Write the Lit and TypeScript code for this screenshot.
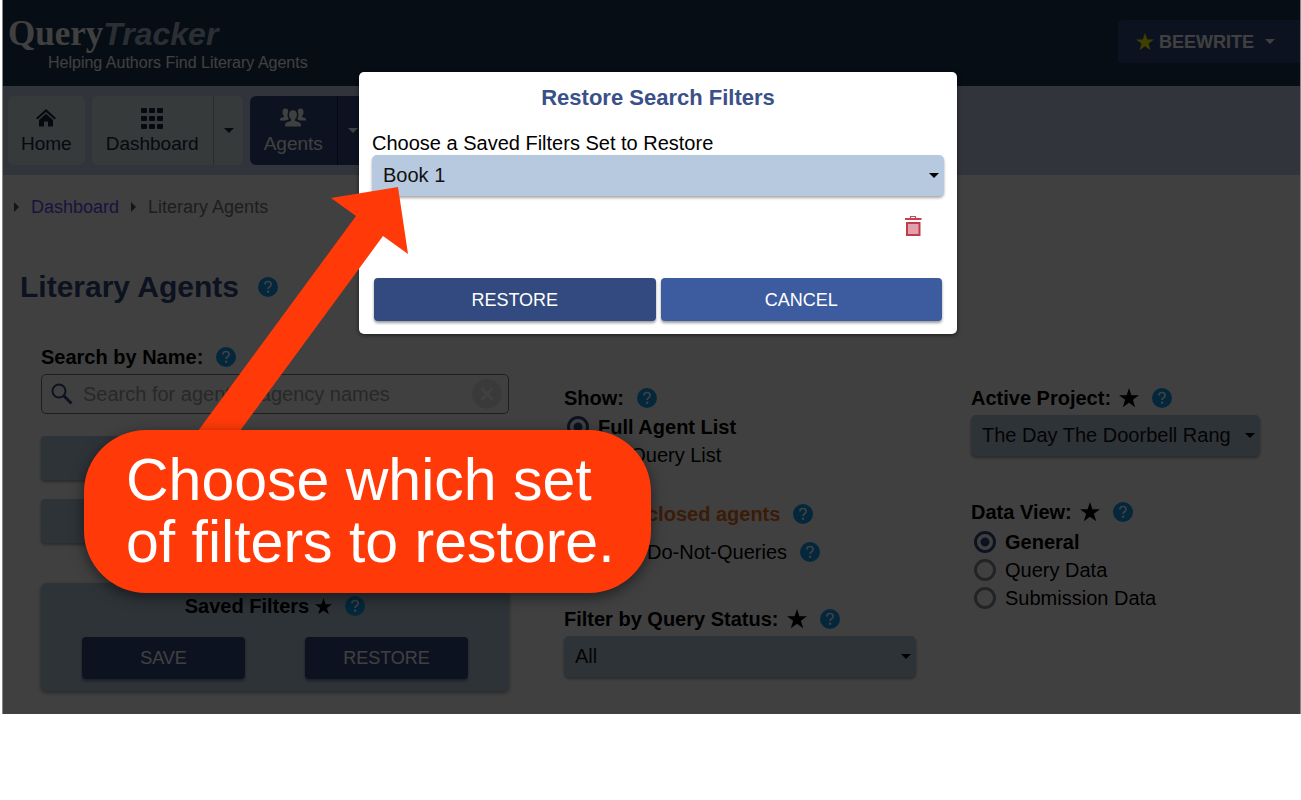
import { LitElement, html, svg, css } from "lit";
import { customElement, property } from "lit/decorators.js";

const caret = html`<svg class="caret" viewBox="0 0 10 5" width="10" height="5" aria-hidden="true"><path d="M0 0h10L5 5z" fill="currentColor" /></svg>`;

const star = html`<svg class="star" viewBox="0 0 20 20" width="20" height="20" aria-hidden="true"><path d="M10 0l2.400 7.300H20l-6.100 4.500 2.300 7.400L10 14.700l-6.200 4.500 2.300-7.400L0 7.300h7.600z" fill="currentColor" /></svg>`;

const help = html`<button class="help" type="button" aria-label="Help">
  <svg viewBox="0 0 20 20" width="20" height="20" aria-hidden="true">
    <circle cx="10" cy="10" r="10" fill="#129cf0" />
    <path d="M6.9 7.6C6.9 5.6 8.2 4.5 10 4.5s3.1 1.1 3.1 2.7c0 1.3-.7 1.9-1.6 2.6-.9.6-1.4 1.1-1.4 2.2" fill="none" stroke="#fff" stroke-width="1.700" />
    <circle cx="10.100" cy="14.700" r="1.200" fill="#fff" />
  </svg>
</button>`;

const controlStyles = css`
  :host {
    display: block;
    font: 20px/24px "Liberation Sans", Arial, sans-serif;
    color: #000;
  }
  * {
    box-sizing: border-box;
  }
  button {
    font: inherit;
    color: inherit;
    border: 0;
    padding: 0;
    background: none;
    cursor: pointer;
  }
  .caret {
    display: block;
  }
`;

@customElement("qt-select")
class QtSelect extends LitElement {
  @property() label = "";
  @property() value = "";
  static styles = [
    controlStyles,
    css`
      .box {
        display: grid;
        align-items: center;
        border-radius: 5px;
        background: #b7c9de;
        box-shadow: 0 2px 3px rgba(0, 0, 0, 0.35);
      }
      select,
      .caret {
        grid-area: 1 / 1;
      }
      select {
        appearance: none;
        width: 100%;
        height: 41px;
        padding: 0 20px 2px 11px;
        border: 0;
        border-radius: 5px;
        background: transparent;
        font: inherit;
        color: #111;
      }
      .caret {
        justify-self: end;
        margin-right: 5px;
        pointer-events: none;
      }
    `,
  ];
  render() {
    return html`<div class="box">
      <select aria-label=${this.label}>
        <option>${this.value}</option>
      </select>
      ${caret}
    </div>`;
  }
}

@customElement("app-root")
class AppRoot extends LitElement {
  static styles = [
    controlStyles,
    css`
      .frame {
        position: relative;
        margin: 0 1px 0 3px;
        background: #fff;
        box-shadow: 0 0 0 1px #888;
      }
      header {
        display: flex;
        justify-content: space-between;
        height: 86px;
        padding-left: 5px;
        background: #1a3654;
        color: #fff;
      }
      .logo {
        padding-top: 14px;
        font-size: 32px;
        line-height: 40px;
        font-weight: bold;
      }
      .query {
        font-family: "Liberation Serif", serif;
        font-size: 35px;
      }
      .tracker {
        font-style: italic;
        color: #acbcd4;
      }
      .tagline {
        padding-left: 40px;
        font-size: 16px;
        line-height: 18px;
      }
      .account {
        display: flex;
        align-items: center;
        align-self: flex-start;
        gap: 5px;
        height: 43px;
        margin-top: 20px;
        padding: 0 25px 0 18px;
        border-radius: 4px 0 0 4px;
        background: #324a80;
        font-size: 18px;
        font-weight: bold;
      }
      .account .star {
        width: 18px;
        height: 18px;
        color: #ff0;
      }
      .account .caret {
        margin-left: 6px;
      }
      nav.main {
        display: flex;
        gap: 7px;
        padding: 10px 5px;
        background: #c6d0ec;
      }
      .item {
        display: flex;
        height: 69px;
        border-radius: 6px;
        background: #dce6ec;
        color: #18243c;
        font-size: 19px;
      }
      .item a {
        display: flex;
        flex-direction: column;
        align-items: center;
        gap: 3px;
        padding: 11px 14px 0;
        color: inherit;
        text-decoration: none;
      }
      .item.narrow a {
        padding: 11px 13px 0;
      }
      .item a svg {
        height: 22px;
      }
      .item button {
        width: 30px;
        padding-left: 10px;
        border-left: 1px solid #a8b4c0;
      }
      .item.active {
        background: #324a80;
        color: #fff;
      }
      .item.active button {
        border-color: #16224a;
      }
      .crumbs {
        display: flex;
        align-items: center;
        gap: 12px;
        padding: 20px 11px 0;
        font-size: 18px;
        color: #777;
      }
      .crumbs a {
        color: #6a4cff;
        text-decoration: none;
      }
      .crumbs span {
        display: flex;
        align-items: center;
        gap: 12px;
      }
      h1 {
        display: flex;
        align-items: center;
        margin: 50px 0 40px;
        padding-left: 17px;
        font-size: 30px;
        line-height: 36px;
        color: #324a80;
      }
      .help {
        display: block;
        flex: none;
        width: 20px;
        height: 20px;
        margin-left: 13px;
      }
      .help svg {
        display: block;
      }
      h1 .help {
        margin-left: 19px;
      }
      .filters {
        display: grid;
        grid-template-columns: 468fr 352fr 289fr;
        column-gap: 55px;
        padding: 0 40px 23px 38px;
      }
      .lower {
        padding-top: 41px;
      }
      .label {
        display: flex;
        align-items: center;
        font-weight: bold;
      }
      .label .star {
        margin-left: 8px;
      }
      .search {
        display: flex;
        align-items: center;
        height: 40px;
        margin: 5px 0 22px;
        padding: 0 6px 0 9px;
        border: 1px solid #777;
        border-radius: 5px;
      }
      .search input {
        flex: 1;
        min-width: 0;
        padding: 0 10px;
        border: 0;
        outline: 0;
        background: none;
        font: inherit;
      }
      .search input::placeholder {
        color: #a0a0a0;
        opacity: 1;
      }
      .search svg {
        display: block;
      }
      .wide {
        display: block;
        width: 100%;
        height: 44px;
        margin-bottom: 19px;
        border-radius: 4px;
        background: #b7c9de;
        box-shadow: 0 2px 3px rgba(0, 0, 0, 0.35);
      }
      .saved {
        margin-top: 40px;
        padding: 11px 41px 12px;
        border-radius: 6px;
        background: #b7c9de;
        box-shadow: 0 2px 4px rgba(0, 0, 0, 0.4);
      }
      .saved .label {
        justify-content: center;
      }
      .saved .star {
        width: 17px;
        height: 17px;
        margin-left: 6px;
      }
      .pair {
        display: grid;
        grid-template-columns: 1fr 1fr;
        gap: 60px;
        margin-top: 19px;
      }
      .primary,
      .secondary {
        height: 42px;
        border-radius: 4px;
        background: #324a80;
        box-shadow: 0 2px 3px rgba(0, 0, 0, 0.4);
        color: #fff;
        font-size: 18px;
      }
      .options {
        margin-top: 3px;
      }
      .choice {
        display: flex;
        align-items: center;
        height: 28px;
      }
      .choice label {
        display: flex;
        align-items: center;
        gap: 9px;
      }
      .choice input {
        appearance: none;
        width: 22px;
        height: 22px;
        margin: 0 0 0 3px;
        border: 3px solid #8c8c98;
        border-radius: 50%;
      }
      .choice input[type="checkbox"] {
        border-radius: 3px;
      }
      .choice input[type="radio"]:checked {
        border-color: #324a80;
        background: radial-gradient(circle, #324a80 4px, transparent 5px);
      }
      .strong {
        font-weight: bold;
      }
      .choice.hide label {
        gap: 58px;
      }
      .closed {
        margin: 31px 0 10px;
        font-weight: bold;
        color: #e8701c;
      }
      .status {
        margin: 41px 0 5px;
      }
      .project {
        margin-bottom: 5px;
      }
      .view {
        margin: 44px 0 4px;
      }
      .backdrop {
        position: absolute;
        inset: 0;
        display: flex;
        align-items: flex-start;
        justify-content: center;
        padding: 72px 0 0 13px;
        background: rgba(0, 0, 0, 0.75);
      }
      .modal {
        width: 598px;
        padding: 14px 13px 13px;
        border-radius: 5px;
        background: #fff;
        box-shadow: 0 1px 4px rgba(0, 0, 0, 0.6);
      }
      .modal h2 {
        margin: 0 0 21px;
        font-size: 22px;
        line-height: 24px;
        text-align: center;
        color: #3a5088;
      }
      .modal p {
        margin: 0;
      }
      .trash {
        display: block;
        margin: 19px 21px 0 auto;
      }
      .trash svg {
        display: block;
      }
      .actions {
        display: grid;
        grid-template-columns: 1fr 1fr;
        gap: 5px;
        margin-top: 41px;
        padding: 0 2px;
      }
      .actions button {
        height: 43px;
      }
      .secondary {
        background: #3d5c9f;
      }
      .arrow {
        position: absolute;
        left: 178px;
        top: 187px;
      }
      .callout {
        position: absolute;
        left: 81px;
        top: 430px;
        width: 567px;
        padding: 19px 0 20px 42px;
        border-radius: 62px;
        background: #ff3a08;
        box-shadow: 0 4px 14px rgba(0, 0, 0, 0.5);
        color: #fff;
        font-size: 59px;
        line-height: 62px;
        white-space: nowrap;
      }
    `,
  ];

  private choice(type: string, name: string, text: string, checked = false) {
    return html`<div class="choice">
      <label class=${checked ? "strong" : ""}><input type=${type} name=${name} .checked=${checked} />${text}</label>
    </div>`;
  }

  render() {
    const squares = [0, 8, 16].flatMap((y) => [0, 8, 16].map((x) => svg`<rect x=${x} y=${y} width="6" height="5" rx="1" />`));
    return html`<div class="frame">
      <header>
        <div>
          <div class="logo"><span class="query">Query</span><span class="tracker">Tracker</span></div>
          <div class="tagline">Helping Authors Find Literary Agents</div>
        </div>
        <button class="account" type="button">${star}BEEWRITE ${caret}</button>
      </header>
      <nav class="main">
        <div class="item narrow">
          <a href="#">
            <svg viewBox="0 0 20 22" width="20" height="22" fill="currentColor" aria-hidden="true">
              <path d="M10 2L0 11l1.400 1.600L10 5l8.600 7.600L20 11z" />
              <path d="M10 6.800l-7 6.200v6.600h5v-5.200h4v5.200h5V13z" />
            </svg>
            Home
          </a>
        </div>
        <div class="item">
          <a href="#"><svg viewBox="0 -1 22 22" width="22" height="22" fill="currentColor" aria-hidden="true">${squares}</svg>Dashboard</a>
          <button type="button" aria-label="Dashboard menu">${caret}</button>
        </div>
        <div class="item active">
          <a href="#">
            <svg viewBox="0 0 26 22" width="26" height="22" fill="currentColor" aria-hidden="true">
              <path d="M13 3.200c2.600 0 3.900 1.700 3.900 4.300 0 2-.8 3.800-2 4.800v1.700c2.900.8 6 1.600 6 3.200v2.300H5.100v-2.300c0-1.600 3.100-2.400 6-3.200v-1.700c-1.200-1-2-2.800-2-4.800 0-2.600 1.300-4.300 3.900-4.300z" />
              <path d="M5.400 1.500C7.200 1.500 8.300 2.600 8.200 4.500 7 7.700 7.500 10 8.600 11.700L8.400 12.600l-2.800 1H0v-1.200c0-1.400 2-1.900 4-2.400V8.800C3 7.900 2.500 6.500 2.500 4.900c0-2.200 1.100-3.400 2.900-3.400z" />
              <path d="M20.600 1.500c-1.800 0-2.900 1.100-2.800 3 1.200 3.200.7 5.500-.4 7.200l.2.900 2.800 1H26v-1.200c0-1.400-2-1.900-4-2.400V8.800c1-.9 1.500-2.300 1.500-3.900 0-2.200-1.100-3.400-2.900-3.400z" />
            </svg>
            Agents
          </a>
          <button type="button" aria-label="Agents menu">${caret}</button>
        </div>
      </nav>
      <nav class="crumbs" aria-label="Breadcrumb">
        ${["Dashboard", "Literary Agents"].map(
          (text, i) => html`<span>
            <svg viewBox="0 0 5 10" width="5" height="10" fill="#555" aria-hidden="true"><path d="M0 0l5 5-5 5z" /></svg>
            ${i === 0 ? html`<a href="#">${text}</a>` : text}
          </span>`,
        )}
      </nav>
      <h1>Literary Agents ${help}</h1>
      <main class="filters">
        <section>
          <div class="label"><label for="name">Search by Name:</label>${help}</div>
          <div class="search">
            <svg viewBox="0 0 22 22" width="22" height="22" fill="none" stroke="#324a80" aria-hidden="true">
              <circle cx="8" cy="8" r="6.500" stroke-width="2" />
              <path d="M12.500 12.500L20.500 20.500" stroke-width="3" />
            </svg>
            <input id="name" type="text" placeholder="Search for agent or agency names" />
            <button type="button" aria-label="Clear search">
              <svg viewBox="0 0 30 30" width="30" height="30" aria-hidden="true">
                <circle cx="15" cy="15" r="15" fill="#e8e8ec" />
                <path d="M9.500 9.500l11 11M20.500 9.500l-11 11" stroke="#fff" stroke-width="3" />
              </svg>
            </button>
          </div>
          <button class="wide" type="button" aria-label="Search"></button>
          <button class="wide" type="button" aria-label="Reset"></button>
          <div class="saved">
            <div class="label">Saved Filters ${star}${help}</div>
            <div class="pair">
              <button class="primary" type="button">SAVE</button>
              <button class="primary" type="button">RESTORE</button>
            </div>
          </div>
        </section>
        <section class="lower">
          <div class="label">Show:${help}</div>
          <div class="options">
            ${this.choice("radio", "show", "Full Agent List", true)} ${this.choice("radio", "show", "My Query List")}
          </div>
          <div class="choice hide closed">
            <label><input type="checkbox" />closed agents</label>${help}
          </div>
          <div class="choice hide">
            <label><input type="checkbox" />Do-Not-Queries</label>${help}
          </div>
          <div class="label status">Filter by Query Status:${star}${help}</div>
          <qt-select label="Filter by Query Status" value="All"></qt-select>
        </section>
        <section class="lower">
          <div class="label project">Active Project:${star}${help}</div>
          <qt-select label="Active Project" value="The Day The Doorbell Rang"></qt-select>
          <div class="label view">Data View:${star}${help}</div>
          ${this.choice("radio", "view", "General", true)} ${this.choice("radio", "view", "Query Data")}
          ${this.choice("radio", "view", "Submission Data")}
        </section>
      </main>
      <div class="backdrop">
        <div class="modal" role="dialog" aria-labelledby="title">
          <h2 id="title">Restore Search Filters</h2>
          <p>Choose a Saved Filters Set to Restore</p>
          <qt-select label="Choose a Saved Filters Set to Restore" value="Book 1"></qt-select>
          <button class="trash" type="button" aria-label="Delete">
            <svg viewBox="0 0 20 22" width="20" height="22" aria-hidden="true">
              <path d="M7.500 3V1.500h5V3" fill="none" stroke="#c8485a" stroke-width="1.200" />
              <path d="M2 4h16.500" stroke="#c44052" stroke-width="2" />
              <rect x="4" y="8" width="12.500" height="12" fill="#e2a0ac" stroke="#c03c4c" stroke-width="2" />
            </svg>
          </button>
          <div class="actions">
            <button class="primary" type="button">RESTORE</button>
            <button class="secondary" type="button">CANCEL</button>
          </div>
        </div>
      </div>
      <svg class="arrow" viewBox="0 0 227 263" width="227" height="263" aria-hidden="true">
        <path d="M217 0L150 11l25 18L3 263h42L202 49l25 18z" fill="#ff3a08" />
      </svg>
      <div class="callout">Choose which set<br />of filters to restore.</div>
    </div>`;
  }
}
